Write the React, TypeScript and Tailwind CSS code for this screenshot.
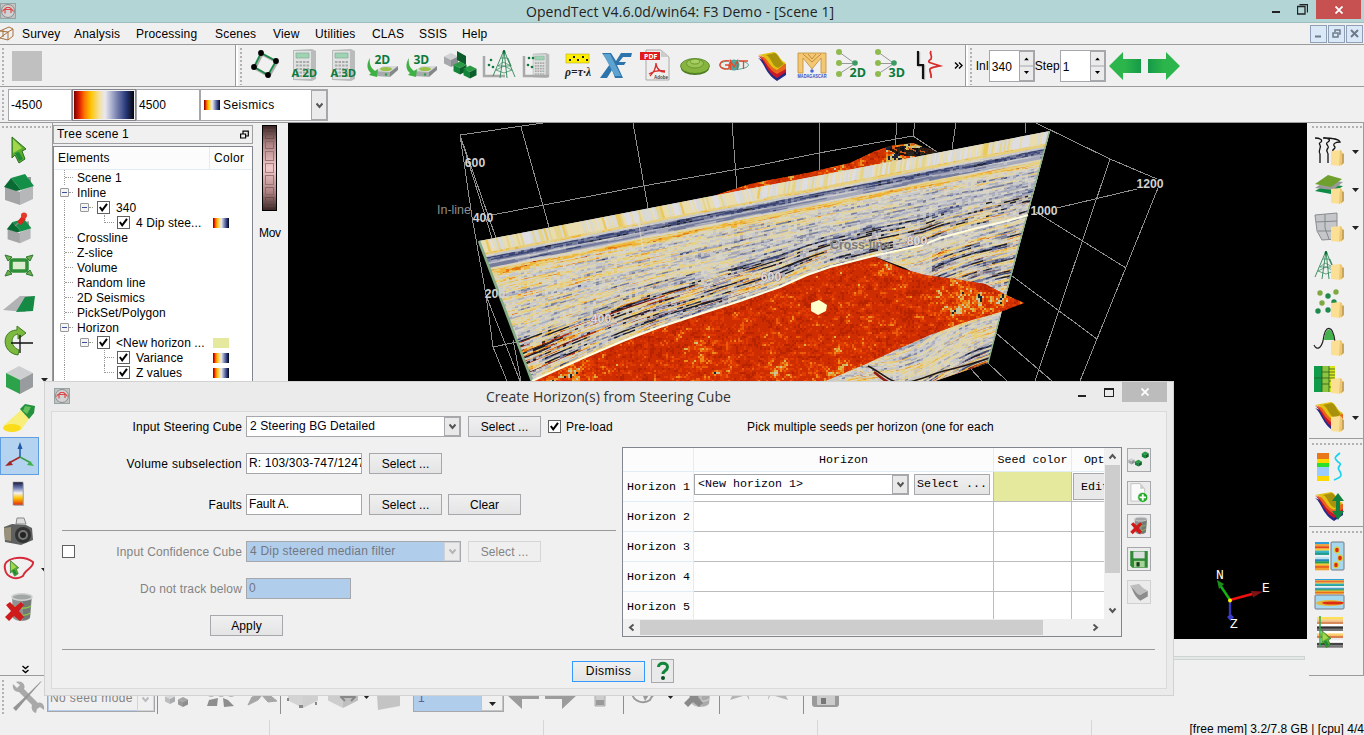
import React from "react";

type Kids = { children?: React.ReactNode };

/* ---------- noise helpers ---------- */
const hash = (x: number, y: number) => {
  let h = (Math.imul(x | 0, 374761393) + Math.imul(y | 0, 668265263)) | 0;
  h = Math.imul(h ^ (h >>> 13), 1274126177);
  return ((h ^ (h >>> 16)) >>> 0) / 4294967296;
};
const smooth = (t: number) => t * t * (3 - 2 * t);
const noise = (x: number, y: number) => {
  const xi = Math.floor(x);
  const yi = Math.floor(y);
  const u = smooth(x - xi);
  const v = smooth(y - yi);
  const a = hash(xi, yi) * (1 - u) + hash(xi + 1, yi) * u;
  const b = hash(xi, yi + 1) * (1 - u) + hash(xi + 1, yi + 1) * u;
  return a * (1 - v) + b * v;
};

/* ---------- seismic section ---------- */
const horizon: [number, number][] = [
  [470, 408], [532, 381], [583, 358], [623, 341], [657, 328], [703, 313], [740, 301], [780, 287],
  [807, 275], [830, 267], [873, 256], [923, 245], [940, 238], [973, 229], [1007, 221], [1028, 215], [1060, 206],
];
const horizonY = (x: number) => {
  for (let i = 1; i < horizon.length; i++) {
    if (x <= horizon[i][0]) {
      const [x0, y0] = horizon[i - 1];
      const [x1, y1] = horizon[i];
      return y0 + ((y1 - y0) * (x - x0)) / (x1 - x0);
    }
  }
  return 206;
};
const topY = (x: number) => 241 - (x - 479) * 0.193;
const palette = [
  "#6b1512", "#b32c10", "#e67a0c", "#efb63a", "#e8cf7c", "#e0d5a8", "#d8d5c8", "#c6c7cc", "#a6a9bb", "#767c9c", "#3c4674", "#1c1c28",
];

const layerY = (t: number, x: number) => {
  const yt = topY(x);
  const yh = horizonY(x);
  if (t <= 1) {
    const k = smooth(Math.min(1, t / 0.8));
    const thick = 150 * (1 - k) + (yh - yt) * k;
    return yt + t * thick;
  }
  const d = (t - 1) * 120;
  const bump = x > 860 ? Math.sin((x - 850) / 30) * Math.min(6, d * 0.06) : 0;
  return yh + d + bump + Math.max(0, x - 900) * -0.06 * (t - 1);
};

const buildSection = () => {
  const out: string[] = palette.map(() => "");
  const step = 3;
  for (let r = 0; r < 300; r++) {
    const t = 0.06 + r * 0.0078;
    for (let x = 476; x < 1052; x += step) {
      if (t > 1.02 && x < 820) continue;
      const y = layerY(t, x);
      let v: number;
      const n = noise(x / 24 + r * 7.3, r * 0.9) - 0.5;
      const layer = noise(3.7, r * 0.62) - 0.5;
      const grain = hash(x, r) - 0.5;
      if (t < 0.105) v = 3.9 + n * 1.6 + grain;
      else if (t < 0.115) v = 6.5 + n * 2;
      else if (t < 0.15) v = 9.3 + n * 2.4 + grain;
      else if (t < 0.165) v = 7.4 + n * 3;
      else if (t < 0.185) v = 8.4 + n * 3;
      else if (t < 0.205) v = 5.5 + n * 3;
      else if (t < 0.235) v = 3.2 + n * 3 + grain;
      else if (t > 0.7 && t < 0.95) {
        const wave = Math.sin(r * 1.55) * 2.2;
        v = 5.4 + wave + n * 10.5 + grain * 2.6;
        if (v > 9 && v < 10.2) v += 1.4;
      } else {
        const strong = t > 0.6 && t < 1.0 ? 1.4 : t > 2.1 ? 2.2 : t > 1.1 && x > 930 && t < 1.6 ? 1.9 : 1;
        v = 5.4 + layer * 2.6 * strong + n * 5.4 * strong + grain * 2.6;
      }
      const i = Math.max(0, Math.min(palette.length - 1, Math.round(v)));
      out[i] += `M${x} ${y.toFixed(1)}L${x + step} ${layerY(t, x + step).toFixed(1)}`;
    }
  }
  return out;
};

const buildCap = () => {
  const colors = ["#dedee2", "#e4d48c", "#e9dcae", "#d9d9d6", "#ecc95c"];
  const out = colors.map(() => "");
  for (let x = 474; x < 1052; x += 2) {
    const n = noise(x / 5, 2) * 0.6 + hash(x, 8) * 0.5;
    const i = n < 0.4 ? 0 : n < 0.6 ? 2 : n < 0.72 ? 3 : n < 0.9 ? 1 : 4;
    out[i] += `M${x} ${(topY(x) - 1).toFixed(1)}l${x < 760 ? 4 : -2} 13`;
  }
  return colors.map((c, i) => ({ c, d: out[i] }));
};

const clusters: [number, number, number, number][] = [
  [965, 303, 30, 0.42], [995, 298, 16, 0.26], [575, 376, 24, 0.42], [716, 373, 12, 0.5], [783, 373, 20, 0.42],
  [790, 303, 8, 0.3], [845, 350, 18, 0.2], [700, 350, 30, 0.15], [890, 270, 16, 0.25], [845, 376, 20, 0.55],
];
const surfaceColors = ["#b92400", "#de3a02", "#ea5c08", "#ec8a1a", "#d8b44c", "#c8c49a", "#1b2130"];
const buildSurface = (x0: number, x1: number, y0: number, y1: number, back: boolean) => {
  const out = surfaceColors.map(() => "");
  for (let y = y0; y < y1; y += 2) {
    for (let x = x0; x < x1; x += 2) {
      let c = 0;
      if (back) c = x > 885 ? 0.6 : 0.18;
      else
        for (const [cx, cy, rad, w] of clusters) {
          const d = ((x - cx) * (x - cx) + (y - cy) * (y - cy) * 2.4) / (rad * rad);
          if (d < 4) c += w * Math.exp(-d);
        }
      const s = noise(x / 7, y / 4) * 0.45 + hash(x, y) * 0.36 + noise(x / 3 + 9, y / 3) * 0.2;
      const v = s + c * (noise(x / 6 + 40, y / 4) * 1.1 + 0.1);
      let i = -1;
      if (v < 0.34) i = 0;
      else if (v > 1.08) i = 6;
      else if (v > 0.98) i = 5;
      else if (v > 0.9) i = 4;
      else if (v > 0.82) i = 3;
      else if (v > 0.73) i = 2;
      else if (v > 0.6) i = 1;
      if (i >= 0) out[i] += `M${x} ${y}h2v2h-2z`;
    }
  }
  return out;
};

const section = buildSection();
const cap = buildCap();
const surface = buildSurface(532, 1026, 254, 382, false);
const backSurface = buildSurface(714, 940, 142, 198, true);
const horizonPts = horizon.slice(1, -1).map((p) => p.join(",")).join(" ");

const gridLines = [
  "M460 135L543 123", "M460 135L472 217L486 295L493 347L507 381", "M460 135L492 238", "M460 135L496 238",
  "M521 127L549 227", "M633 123L648 208", "M732 123L737 189", "M492 215L643 186L750 167L819 153L913 136L937 152",
  "M493 347L517 342", "M487 298L520 381", "M513 340L521 381", "M819 123V170", "M897 123L895 147", "M915 123L913 136",
  "M956 123L952 149", "M1026 123L1025 133", "M1036 123L1110 159L1157 179", "M1110 159L1035 381",
  "M1158 188L1080 381", "M1057 208L1137 189", "M1036 212L1126 268", "M1012 276L1097 339", "M996 333L1052 381",
  "M988 363L1007 381", "M970 368L982 381",
];

const Scene = () => (
  <svg className="block shrink-0 bg-black tracking-normal" width="1019" height="516" viewBox="288 123 1019 516">
    <defs>
      <clipPath id="sec"><polygon points="479,241 1050,131 988,363 935,381 532,381" /></clipPath>
      <clipPath id="surf">
        <polygon points={`${horizon.slice(1, 11).map((p) => p.join(",")).join(" ")} 900,268 925,275 955,279 985,284 1006,295 1024,303 1000,312 965,322 930,335 900,348 868,363 825,381`} />
      </clipPath>
      <clipPath id="back"><polygon points="716,195 750,184 760,182 807,173 850,163 873,152 890,146 913,143 937,152 937,156 716,200" /></clipPath>
    </defs>
    <g fill="none" stroke="#8f8f8f" strokeWidth="1" shapeRendering="crispEdges">
      {gridLines.map((d) => <path key={d} d={d} />)}
    </g>
    <g clipPath="url(#back)" shapeRendering="crispEdges">
      <polygon points="716,200 716,190 873,148 895,144 905,158" fill="#cc3300" />
      {backSurface.map((d, i) => <path key={i} d={d} fill={surfaceColors[i]} />)}
      <path d="M888 149l14-3 4 4 34-6v14l-34-2-10-2z" fill="#0b0b10" opacity=".85" />
      <path d="M892 148l5 2M900 152l6 1M911 144h4M908 148l8 3M920 151l5 1" stroke="#c9581c" strokeWidth="1.500" />
    </g>
    <g clipPath="url(#sec)">
      <rect x="470" y="125" width="590" height="260" fill="#d4d2cc" />
      {section.map((d, i) => <path key={i} d={d} stroke={palette[i]} strokeWidth="1.400" fill="none" />)}
      {cap.map((s, i) => <path key={i} d={s.d} stroke={s.c} strokeWidth="2.2" fill="none" />)}
      <path d="M875 231l8 24M637 212l6 38" stroke="#e6e2d0" strokeWidth="1.5" opacity=".6" />
      <path d="M868 366c16 8 22 17 36 17 16-2 28-10 48-14 14-3 24-7 38-11" stroke="#20160f" strokeWidth="1.500" fill="none" />
      <path d="M874 372c10 8 14 11 20 12M935 383c16-8 34-9 54-18" stroke="#8e1d16" strokeWidth="2.500" fill="none" />
    </g>
    <polygon points="873,256 905,268 914,273 906,274 897,270" fill="#0a0a0a" />
    <g clipPath="url(#surf)">
      <rect x="530" y="250" width="500" height="132" fill="#cd2d00" />
      <g shapeRendering="crispEdges">{surface.map((d, i) => <path key={i} d={d} fill={surfaceColors[i]} />)}</g>
    </g>
    <path d="M479 241L532 381" stroke="#86ad85" strokeWidth="2.6" />
    <path d="M1049.500 131L1007 290M1000 316L988 363" stroke="#8fb48c" strokeWidth="1.4" fill="none" />
    <polyline points={horizonPts} fill="none" stroke="#fffce0" strokeWidth="2" />
    <polygon points="811,303 819,300 827,305 826,311 818,315 811,311" fill="#ffffcc" />
    <g fontFamily="'Liberation Sans', Arial, sans-serif" fontSize="12.200" fontWeight="bold" textAnchor="middle" fill="#d2d2d2">
      <text x="475" y="167">600</text>
      <text x="483" y="222">400</text>
      <text x="454" y="214" fill="#8f8f8f" fontWeight="normal" fontSize="12.500">In-line</text>
      <text x="495" y="298">200</text>
      <text x="601" y="323" fill="#e2dada" stroke="#6a6068" strokeWidth=".6" paintOrder="stroke">400</text>
      <text x="771" y="281" fill="#e2dada" stroke="#6a6068" strokeWidth=".6" paintOrder="stroke">600</text>
      <text x="860" y="249" fill="#7a7a7a">Cross-line</text>
      <text x="917" y="245" fill="#e2dada" stroke="#6a6068" strokeWidth=".6" paintOrder="stroke">800</text>
      <text x="1044" y="215">1000</text>
      <text x="1150" y="188">1200</text>
    </g>
    <g fill="none">
      <path d="M1230 600l-10-15" stroke="#12b512" strokeWidth="2.4" />
      <path d="M1217 580l7 4-5 5z" fill="#1a8f1a" />
      <path d="M1230 600l24-6.500" stroke="#f01010" strokeWidth="2.400" />
      <path d="M1251 591l12 .5-10 6z" fill="#7d1212" />
      <path d="M1230 600v16" stroke="#3535b5" strokeWidth="2.400" />
      <path d="M1227 617l3.500-3 3.500 3-3.500 4z" fill="#3c3cc8" />
      <circle cx="1230" cy="600.500" r="2" fill="#ffee00" />
    </g>
    <g fontFamily="'Liberation Mono', 'Courier New', monospace" fontSize="13" fill="#fff" textAnchor="middle">
      <text x="1220" y="579">N</text><text x="1266" y="592">E</text><text x="1234" y="628">Z</text>
    </g>
  </svg>
);

/* ---------- icons ---------- */
const Ico = ({ children, s = 32 }: Kids & { s?: number }) => (
  <svg className="block shrink-0 overflow-visible tracking-normal" width={s} height={s} viewBox="0 0 32 32" fill="none">{children}</svg>
);
const Tx = ({ x, y, s = 12, children, fill = "#0b7a3b", w = "bold" }: Kids & { x: number; y: number; s?: number; fill?: string; w?: string }) => (
  <text x={x} y={y} fontSize={s} fontWeight={w} fill={fill} fontFamily="'Open Sans', sans-serif">{children}</text>
);
const Cube = ({ x, y, r, a, b, c }: { x: number; y: number; r: number; a: string; b: string; c: string }) => {
  const h = r * 0.5;
  return (
    <g>
      <path d={`M${x} ${y - r}l${r} ${h}l${-r} ${h}l${-r} ${-h}z`} fill={a} />
      <path d={`M${x - r} ${y - h}l${r} ${h}v${r}l${-r} ${-h}z`} fill={b} />
      <path d={`M${x + r} ${y - h}l${-r} ${h}v${r}l${r} ${-h}z`} fill={c} />
    </g>
  );
};
const green = { a: "#2a9a45", b: "#12853a", c: "#0b5f2a" };
const gray3 = { a: "#d0d2d4", b: "#a6a8ab", c: "#8d9093" };

const Calc = ({ x = 5 }: { x?: number }) => (
  <g>
    <path d={`M${x} 1l19-1 4 2v28l-4 2-19-1z`} fill="#b9bcbb" />
    <path d={`M${x + 1} 2h17v28h-17z`} fill="#dfe2e1" />
    <path d={`M${x + 3} 4h13v5h-13z`} fill="#9fd3b4" stroke="#7fa690" strokeWidth=".6" />
    <path d={`M${x + 3} 13h13M${x + 3} 16.500h13M${x + 3} 20h13M${x + 3} 23.500h13M${x + 3} 27h13`} stroke="#aaa" strokeWidth="2" strokeDasharray="2.500 1" />
  </g>
);
const Drive = () => (
  <g>
    <path d="M9 22l8-5h15l-8 6z" fill="#d6d8da" /><path d="M9 22l15 1v5l-15-1z" fill="#a9acae" /><path d="M24 23l8-6v4l-8 7z" fill="#85888b" />
    <ellipse cx="20" cy="20" rx="6" ry="2" fill="#9ac24a" /><circle cx="20" cy="25.500" r="1.200" fill="#27a343" />
    <path d="M4 9c-4 6-3 12 1 15l-2 2 8 2 1-8-3 2C5 19 3 15 4 9z" fill="#3fb043" />
  </g>
);
const Tower = ({ x = 16, y = 1, h = 28 }: { x?: number; y?: number; h?: number }) => (
  <g stroke="#2c8555" strokeWidth=".9">
    <path d={`M${x} ${y}l-11 ${h - 2}M${x} ${y}l11 ${h - 1}M${x} ${y}l-4 ${h}M${x} ${y}l3 ${h}`} />
    <path d={`M${x - 3} ${y + 8}h6l4 8h-13l5-4 8 4-3-8M${x - 8} ${y + 20}l8-4 8 4-8 3z`} strokeWidth=".7" />
    <circle cx={x} cy={y + 2} r="1.400" fill="#0b6b35" stroke="none" />
  </g>
);
const Folder = () => (
  <g>
    <path d="M17 15l9-1 1 2 3 1v10l-3 3-10-1z" fill="#fbdf94" /><path d="M27 17l3 1v9l-3 2z" fill="#caa458" /><path d="M26 14l2 1v12l-3 3z" fill="#ecc775" />
  </g>
);
const Layers = () => (
  <g>
    <path d="M1 6c7 5 7 16 19 23l9-6V17z" fill="#232a86" /><path d="M1 4c8 5 7 15 19 22l9-6V14z" fill="#c9162a" />
    <path d="M1 3c8 4 8 13 19 19l9-5V12z" fill="#e8651c" /><path d="M1 3l16-3c5 1 5 8 12 11l-9 7C10 14 12 4 1 3z" fill="#e3c011" /><path d="M9 3l9-2c4 2 5 8 9 11l-6 4C14 13 15 6 9 3z" fill="#a8920b" />
  </g>
);
const Node3 = ({ t }: { t: string }) => (
  <g>
    <path d="M4 3l16 11.500L4 25M4 14.500h16" stroke="#999" />
    {[[4, 3], [4, 14], [4, 25]].map(([a, b]) => <circle key={b} cx={a} cy={b} r="3" fill="#8fba4e" />)}
    <circle cx="20" cy="14" r="2.800" fill="#3b9c63" />
    <Tx x={14.500} y={28} s={12.500}>{t}</Tx>
  </g>
);
const Trash = ({ g = false }: { g?: boolean }) => (
  <g>
    <path d="M9 4l1 22c3 4 14 4 17 0l2-22z" fill={g ? "#bbb" : "#8f9391"} /><path d="M20 8v20c3 0 6-1 7-3l1-18z" fill={g ? "#aaa" : "#747876"} />
    <ellipse cx="19" cy="5" rx="10" ry="3.200" fill={g ? "#aaa" : "#a2a6a4"} stroke="#cfd2d0" strokeWidth="1.500" />
    <path d="M10 14c5 3 14 3 18 0M10 21c5 3 14 3 17 0" stroke={g ? "#ccc" : "#8bc34a"} strokeWidth="1.300" />
    <path d="M3 13l4-3 5 5 6-5 3 3-5 6 5 6-4 4-6-5-5 5-4-4 6-6z" fill={g ? "#8a8a8a" : "#cf1b1b"} />
  </g>
);
const Cursor = ({ x = 0, y = 0, k = 1 }: { x?: number; y?: number; k?: number }) => (
  <g transform={`translate(${x} ${y}) scale(${k})`}>
    <path d="M9 1l14 12-4 2 3 8-6 4-4-8-3 3z" fill="#5cae2f" stroke="#2b6d22" /><path d="M10 3l9 9-9 5z" fill="#a4d64c" /><path d="M16 16l4 7-4 2-4-8z" fill="#1d8b38" />
  </g>
);
const RainbowV = ({ x, y, w, h }: { x: number; y: number; w: number; h: number }) => {
  const c = ["#2d9fd8", "#f0a030", "#e5481f", "#f5d040", "#3ab5d0", "#1c9c88", "#e8f0f4", "#bfe0ef", "#2487c0", "#25a050", "#f2c63a", "#e8641f", "#f0a030"];
  return <g>{c.map((k, i) => <rect key={i} x={x} y={y + (h / c.length) * i} width={w} height={h / c.length + 0.3} fill={k} />)}</g>;
};
const Logo = () => (
  <svg className="block shrink-0" width="16" height="16" viewBox="0 0 16 16" fill="none">
    <rect x=".5" y=".5" width="15" height="15" fill="#bfc2c0" stroke="#98a3a3" /><circle cx="8" cy="8" r="6.500" fill="#d2d2d2" stroke="#8d8d8d" />
    <path d="M2.500 8.500L4 6.500h8l1.500 2M4.500 6.500l2-2h3l2 1.500M5 10.500V7M11 10V7" stroke="#dd4848" strokeWidth="1.200" />
  </svg>
);
const Tri = () => <svg width="7" height="4" viewBox="0 0 7 4" className="block shrink-0"><path d="M0 0h7L3.500 4z" fill="#222" /></svg>;

const topIcons: React.ReactNode[] = [
  <g><path d="M12 4l15 8-8 14L5 18z" stroke="#aaa" strokeWidth="3" transform="translate(1 1)" /><path d="M12 4l15 8-8 14L5 18z" stroke="#148a44" strokeWidth="1.800" />{[[12, 4], [27, 12], [19, 26], [5, 18]].map(([a, b]) => <circle key={a} cx={a} cy={b} r="2.900" fill="#000" />)}</g>,
  <g><Calc /><Tx x={3.500} y={27.500} s={11.300}>A 2D</Tx></g>,
  <g><Calc /><Tx x={3.500} y={27.500} s={11.300}>A 3D</Tx></g>,
  <g><Drive /><Tx x={8.500} y={14.500} s={12}>2D</Tx></g>,
  <g><Drive /><Tx x={8.500} y={14.500} s={12}>3D</Tx></g>,
  <g><Cube x={7} y={11} r={7} {...gray3} /><path d="M13 2l9 5v9l-9-5z" fill="#0c5c2b" /><Cube x={16} y={19} r={6.500} {...green} /><Cube x={26} y={23} r={6.500} {...green} /></g>,
  <g><path d="M1 7v20h21" stroke="#a9a9a9" strokeWidth="2.500" /><Tower x={21} /><circle cx="8" cy="11" r="1.300" fill="#0b7a3b" /><circle cx="6" cy="16" r="1.300" fill="#0b7a3b" /><circle cx="10" cy="18" r="1.300" fill="#0b7a3b" /></g>,
  <g><g transform="translate(10 4) scale(.72 .78)"><Calc x={1} /></g><path d="M2 7v20h25" stroke="#a9a9a9" strokeWidth="2.500" /><circle cx="7" cy="9" r="1.300" fill="#0b7a3b" /><circle cx="6" cy="16" r="1.300" fill="#0b7a3b" /><circle cx="11" cy="9" r="1.300" fill="#0b7a3b" /><circle cx="10" cy="18" r="1.300" fill="#0b7a3b" /></g>,
  <g><rect x="5" y="5" width="23" height="9" fill="#ffee00" stroke="#b8ae2a" strokeWidth=".6" />{[8, 12, 16, 21, 25].map((a, i) => <rect key={a} x={a} y={i % 2 ? 7 : 10} width="2" height="2" fill="#222" />)}<text x="4" y="27" fontSize="11.500" fontWeight="bold" fontStyle="italic" fontFamily="'Liberation Serif', serif" fill="#222" textLength="26">ρ=τ·λ</text></g>,
  <g><path d="M2 4h9l5 8 5-8h11l-1 4h-8l-4 5h7l-2 3h-7l6 13h-8l-3-8-5 8H0l10-14z" fill="#2d74ad" /><path d="M3 5h7l11 22h-6z" fill="#5ea3cf" /></g>,
  <g><path d="M7 1h15l8 7v23H7z" fill="#eee" stroke="#aaa" /><path d="M22 1l8 7h-8z" fill="#ccc" /><rect x="1" y="3" width="20" height="8" fill="#e01b1b" /><Tx x={5} y={9.700} s={7} fill="#fff">PDF</Tx><path d="M11 27c3-3 6-8 6-13M17 15c1 5 4 8 9 8M10 25c5-3 10-4 16-3" stroke="#d92c2c" strokeWidth="1.300" /><text x="15" y="30" fontSize="6" fontWeight="bold" fill="#444" textLength="14" lengthAdjust="spacingAndGlyphs" fontFamily="'Liberation Sans', sans-serif">Adobe</text></g>,
  <g><ellipse cx="16" cy="19" rx="14" ry="7" fill="#4b7a22" /><ellipse cx="16" cy="17" rx="14.500" ry="7.500" fill="#86b43e" stroke="#4f7f22" strokeWidth=".8" /><ellipse cx="16" cy="14.500" rx="8.500" ry="4.500" fill="#9ac552" stroke="#5f8d2b" strokeWidth=".8" /><ellipse cx="16" cy="12.500" rx="4.500" ry="2.500" fill="#a9d162" stroke="#5f8d2b" strokeWidth=".8" /></g>,
  <g><ellipse cx="16" cy="16" rx="14.500" ry="4.500" fill="#e8f0ee" stroke="#58a99e" /><circle cx="16" cy="16" r="5.500" fill="#4ea79c" /><path d="M11 12c-4-1-9 0-9 4s7 5 9 3v-3H7M12.500 21v-9l3.500 6 3.500-6v9M21 12h9M25.500 12v8" stroke="#e2492f" strokeWidth="1.300" /></g>,
  <g transform="translate(0 3)"><Layers /></g>,
  <g><path d="M2 24V4h28v20h-5V9l-9 11L7 9v15z" fill="#f4c873" stroke="#c08a35" strokeWidth=".8" /><path d="M7 5l9 8 9-8M12 5l4 5 4-5" stroke="#c08a35" /><circle cx="16" cy="22" r="1.800" fill="#5063d0" /><text x="1.500" y="28.500" fontSize="5" fontWeight="bold" fill="#3b4cc0" textLength="29" lengthAdjust="spacingAndGlyphs" fontFamily="'Liberation Sans', sans-serif">MADAGASCAR</text></g>,
  <Node3 t="2D" />,
  <Node3 t="3D" />,
  <g><path d="M5 2v14h5v14" stroke="#bbb" strokeWidth="2.500" transform="translate(1 1)" /><path d="M5 2v14h5v14" stroke="#111" strokeWidth="2.200" /><path d="M18 2c-2 3 2 5 0 8-3 2-3 3 0 4 3 1 6 2 9 3-4 1-8 1-10 3-1 3 2 4 1 9" stroke="#d92b2b" strokeWidth="1.800" /></g>,
];

const House = () => (
  <g>
    <path d="M2 13l15 5v13L2 26z" fill="#a3a5a7" /><path d="M17 17l13-5v13l-13 6z" fill="#b5b7b9" /><path d="M25 3h3v8h-3z" fill="#999" />
    <path d="M8 4l14-4 9 12-13 4L8 4z" fill="#138f48" /><path d="M1 13L8 4l10 12-5 1z" fill="#0a6a33" />
  </g>
);
const leftIcons: React.ReactNode[] = [
  <Cursor />,
  <House />,
  <g><g transform="translate(3 7) scale(.82 .78)"><House /></g><path d="M12 14L20 6" stroke="#888" strokeWidth="1.500" /><path d="M14 10l5-6 4 3-5 6z" fill="#d92a1f" /><circle cx="21" cy="3.500" r="3" fill="#e23b2c" /></g>,
  <g><path d="M2 5l7 2-4 4zM30 5l-7 2 4 4zM2 26l7-2-4-4zM30 26l-7-2 4-4z" fill="#6fae4e" stroke="#2f7a35" /><rect x="8" y="10" width="16" height="11" rx="2" fill="#dceccf" stroke="#2f8e38" strokeWidth="3.500" /></g>,
  <g><path d="M0 22L17 8h15l-10 16z" fill="#b1b3b5" /><path d="M13 24L22 9l10-1-2 15z" fill="#158a45" /></g>,
  <g><path d="M15 8c-7 1-9 12 1 16l-1 5C-2 27-2 4 14 4V0l9 7-8 6z" fill="#7db93f" stroke="#3d7d22" /><path d="M17 9v18M8 17h22" stroke="#111" strokeWidth="1.300" /></g>,
  <g><path d="M3 9L16 2l14 7-13 7z" fill="#cdcfd0" /><path d="M3 9l14 7v14L3 23z" fill="#2ca24a" /><path d="M17 16l13-7v14l-13 7z" fill="#999c9e" /></g>,
  <g><path d="M0 24L18 8l10 6-10 14z" fill="#f7ee7c" /><ellipse cx="9" cy="26" rx="9" ry="4" fill="#fbdc1b" /><path d="M17 7l5-5 10 2-1 7-5 6z" fill="#23913f" /><path d="M22 4l6 1-4 7-4-3z" fill="#63c05c" /></g>,
  <g strokeWidth="1.500"><path d="M17 17V5" stroke="#2159a8" /><path d="M14.500 9L17 2l2.500 7z" fill="#2159a8" /><path d="M17 17L6 23" stroke="#a32626" /><path d="M2 26l5-5 3 4z" fill="#a32626" /><path d="M17 17l11 6" stroke="#3b9f45" /><path d="M31 26l-7-1 3-4z" fill="#3fb34a" /></g>,
  <g><defs><linearGradient id="cb" x1="0" y1="0" x2="0" y2="1"><stop offset="0" stopColor="#15183a" /><stop offset=".25" stopColor="#6b78b0" /><stop offset=".48" stopColor="#f2f2f2" /><stop offset=".7" stopColor="#ffc400" /><stop offset="1" stopColor="#e02a10" /></linearGradient></defs><rect x="11" y="5" width="10" height="23" fill="#bbb" /><rect x="10" y="4" width="10" height="23" fill="url(#cb)" stroke="#999" strokeWidth=".6" /></g>,
  <g><path d="M13 8l1-6h7l2 6z" fill="#ddd" stroke="#888" /><path d="M1 11l8-3 14 1 6 3 1 12-12 5L2 26z" fill="#5e615f" /><path d="M1 12l7-1v14l-6-1z" fill="#9a917c" /><circle cx="20" cy="19" r="8" fill="#303332" /><circle cx="20" cy="19" r="5" fill="#777" /><circle cx="20" cy="19" r="3" fill="#222" /></g>,
  <g><path d="M2 15C-1 3 20 1 30 8c1 6-8 7-10 14-7 5-17 1-18-7z" stroke="#d62a3a" strokeWidth="2" /><Cursor x={2} y={6} k={0.6} /></g>,
  <Trash />,
];

const rightIcons: React.ReactNode[] = [
  <g stroke="#111" strokeWidth="1.300"><path d="M1 2c5 0 8 2 6 4-4 2 1 3-1 6 0 3-2 3 0 6v9M10 2c5 0 7 2 4 4-4 2 2 4 0 6-3 3 0 4 0 6v9M9 2c9 0 16 1 17 4-5 0-8 2-5 5 1 2-4 2-2 6" /></g>,
  <g><path d="M1 17l12-7 16 2-12 8z" fill="#0f8a44" /><path d="M1 14l12-8 16 2-10 8z" fill="#999" /><path d="M1 10L14 1l14 4-11 8z" fill="#6fa02d" /></g>,
  <g><path d="M1 3l22-2v26L8 28 3 19z" fill="#c4c6c9" stroke="#8b8d90" /><path d="M11 2v14l4 11M2 10l21-1M4 19h19" stroke="#85878a" /></g>,
  <Tower x={12} />,
  <g>{[[6, 5, "#7ea941"], [22, 4, "#7ea941"], [14, 8, "#1f8a4c"], [8, 15, "#7ea941"], [20, 14, "#1f8a4c"], [4, 23, "#1f8a4c"], [14, 22, "#1f8a4c"]].map(([a, b, c]) => <circle key={`${a}-${b}`} cx={a} cy={b} r="2.700" fill={c as string} />)}</g>,
  <g><path d="M10 14C11 0 19 0 20 14z" fill="#43b24c" /><path d="M0 19c3 6 7 3 9-4C11-2 19-2 21 16" stroke="#222" strokeWidth="1.200" /></g>,
  <g><rect x="0" y="2" width="8" height="26" fill="#0f9b4b" /><rect x="8" y="2" width="7" height="26" fill="#8cc63f" /><rect x="15" y="2" width="6" height="26" fill="#dce321" /><path d="M0 14h15M8 8h13M8 20h7M15 5h6M15 11h6M15 17h6M15 14h6M15 23h6M8 2v26M15 2v26" stroke="#2b5c1c" strokeWidth=".8" /></g>,
  <Layers />,
];

/* ---------- small widgets ---------- */
const Chev = ({ c = "#555", w = 7 }: { c?: string; w?: number }) => (
  <svg width={w} height="7" viewBox="0 0 7 7" className="block"><path d="M.5 1.500l3 3.500 3-3.500" stroke={c} strokeWidth="2" fill="none" /></svg>
);
const Combo = ({ text, cls = "", off = false }: { text: string; cls?: string; off?: boolean }) => (
  <div className={`flex h-[21px] w-[215px] shrink-0 items-stretch border border-[#a5a7ab] ${off ? "bg-[#b0cdec] text-[#74787e]" : "bg-white text-[#000018]"} ${cls}`}>
    <span className="flex-1 overflow-hidden pl-[3px] leading-[19px] whitespace-pre">{text}</span>
    <span className={`flex w-[16px] items-center justify-center border ${off ? "border-[#cfd2d6] bg-[#eaeaea]" : "border-[#a9a9ad] bg-[#e9e9e9]"}`}><Chev c={off ? "#b5b5b5" : "#555"} /></span>
  </div>
);
const Btn = ({ children, cls = "", off = false, mark = false }: Kids & { cls?: string; off?: boolean; mark?: boolean }) => (
  <div className={`flex h-[21px] shrink-0 items-center justify-center border whitespace-pre ${mark ? "border-[#3399ff]" : off ? "border-[#d5d5d5] text-[#838383]" : "border-[#a6a8ac]"} ${off ? "bg-[#efefef]" : "bg-linear-to-b from-[#f0f0f0] to-[#e4e4e4]"} ${cls}`}>{children}</div>
);
const Check = ({ on = true }: { on?: boolean }) => (
  <span className="flex h-[13px] w-[13px] shrink-0 items-center justify-center border border-[#606060] bg-white">
    {on && <svg width="9" height="9" viewBox="0 0 9 9"><path d="M.8 4l2.400 3.300L8 .8" stroke="#000" strokeWidth="2" fill="none" /></svg>}
  </span>
);
const Dots = ({ v = false, cls = "" }: { v?: boolean; cls?: string }) => (
  <div className={`shrink-0 bg-[radial-gradient(circle_at_1px_1px,#b2b2b2_1px,transparent_1.200px)] ${v ? "w-[3px] bg-size-[3px_4px]" : "h-[3px] bg-size-[4px_3px]"} ${cls}`} />
);
const Grad = ({ cls = "" }: { cls?: string }) => (
  <span className={`block shrink-0 bg-[linear-gradient(90deg,#7a0000,#e02000_9%,#ff7a00_18%,#ffc400_28%,#f4e0a0_42%,#e8e8f0_52%,#8089b5_70%,#2a3a7c_86%,#05050c)] ${cls}`} />
);
const Field = ({ children, cls = "" }: Kids & { cls?: string }) => (
  <div className={`h-[21px] shrink-0 overflow-hidden border border-[#a5a7ab] pl-[2px] leading-[19px] whitespace-nowrap ${cls}`}>{children}</div>
);

/* ---------- tree ---------- */
type Row = { t: string; lvl: number; exp?: boolean; sw?: "grad" | "plain"; last?: boolean };
const rows: Row[] = [
  { t: "Scene 1", lvl: 0 }, { t: "Inline", lvl: 0, exp: true }, { t: "340", lvl: 1, exp: true },
  { t: "4 Dip stee...", lvl: 2, sw: "grad", last: true }, { t: "Crossline", lvl: 0 }, { t: "Z-slice", lvl: 0 },
  { t: "Volume", lvl: 0 }, { t: "Random line", lvl: 0 }, { t: "2D Seismics", lvl: 0 }, { t: "PickSet/Polygon", lvl: 0 },
  { t: "Horizon", lvl: 0, exp: true }, { t: "<New horizon ...", lvl: 1, exp: true, sw: "plain" },
  { t: "Variance", lvl: 2, sw: "grad" }, { t: "Z values", lvl: 2, sw: "grad", last: true },
];
const Expander = () => (
  <span className="flex h-[9px] w-[9px] shrink-0 items-center justify-center rounded-[1px] border border-[#999] bg-[#f4f4f4]"><span className="h-px w-[5px] bg-[#3b4f9b]" /></span>
);
const HDots = ({ cls = "" }: { cls?: string }) => <span className={`h-0 shrink-0 border-t border-dotted border-[#999] ${cls}`} />;
const TreeRow = ({ r }: { r: Row }) => (
  <div className="flex h-[15px] items-center">
    {r.lvl === 0 && r.exp && <><span className="w-[6px]" /><Expander /><HDots cls="mr-[4px] w-[4px]" /></>}
    {r.lvl === 0 && !r.exp && <><span className="ml-[10px] h-full border-l border-dotted border-[#999]" /><HDots cls="mr-[4px] w-[8px]" /></>}
    {r.lvl > 0 && <span className="ml-[10px] h-full w-[16px] shrink-0 border-l border-dotted border-[#999]" />}
    {r.lvl === 1 && <><Expander /><HDots cls="mr-[4px] w-[4px]" /><Check /><span className="w-[6px]" /></>}
    {r.lvl === 2 && <><span className={`ml-[24px] w-0 shrink-0 border-l border-dotted border-[#999] ${r.last ? "h-[8px] self-start" : "h-full"}`} /><HDots cls="mr-[3px] w-[9px]" /><Check /><span className="w-[6px]" /></>}
    <span className="w-0 flex-1 overflow-visible whitespace-pre">{r.t}</span>
    {r.sw === "grad" && <Grad cls="mr-[23px] h-[10px] w-[16px]" />}
    {r.sw === "plain" && <span className="mr-[23px] h-[10px] w-[16px] shrink-0 bg-[#e4e99e]" />}
  </div>
);

/* ---------- dialog ---------- */
const sideIcons: React.ReactNode[] = [
  <g><Cube x={4} y={18} r={5} {...gray3} /><Cube x={15} y={21} r={5.500} {...green} /><Cube x={26} y={8} r={5.500} {...green} /></g>,
  <g><path d="M3 1h15l7 8v20H3z" fill="#fafafa" stroke="#aaa" /><path d="M18 1l7 8h-7z" fill="#ccc" /><circle cx="22" cy="23" r="8" fill="#23a829" stroke="#fff" /><path d="M22 18v10M17 23h10" stroke="#fff" strokeWidth="3" /></g>,
  <Trash />,
  <g><path d="M2 3h28v27H5l-3-4z" fill="#2f8a36" /><path d="M7 4h18v11H7z" fill="#dcdedd" /><path d="M8 19h17v10H8z" fill="#a8d29a" /><path d="M12 21h5v7h-5z" fill="#153d1a" /></g>,
  <g><path d="M1 6c5 3 5 15 17 24l12-7v-9L18 20z" fill="#8c8c8c" /><path d="M1 6l14-3c5 1 4 7 15 10l-12 8C9 19 9 9 1 6z" fill="#bdbdbd" /></g>,
];

const Label = ({ children, off = false }: Kids & { off?: boolean }) => (
  <span className={`mr-[4px] flex-1 text-right whitespace-pre tracking-[0.14px] ${off ? "text-[#838383]" : ""}`}>{children}</span>
);

const Dialog = () => (
  <div className="absolute top-[381px] left-[44px] flex h-[315px] w-[1130px] flex-col border border-[#d2d2d2] bg-[#ebebeb]">
    <div className="flex h-[29px] items-start">
      <div className="pt-[6px] pl-[9px]"><Logo /></div>
      <div className="flex-1 pt-[4px] pl-[416px] font-['Open_Sans',sans-serif] text-[14px] leading-[22px] tracking-[0.04px] whitespace-nowrap text-[#333]">Create Horizon(s) from Steering Cube</div>
      <div className="mt-[13px] mr-[18px] h-[2px] w-[8px] bg-[#222]" />
      <div className="mt-[6px] mr-[8px] h-[9px] w-[10px] border border-t-2 border-[#222]" />
      <div className="mr-[6px] flex h-[20px] w-[45px] items-center justify-center bg-[#bcbcbc]">
        <svg width="8" height="8" viewBox="0 0 8 8"><path d="M.5.5l7 7M7.500.5l-7 7" stroke="#fff" strokeWidth="1.800" /></svg>
      </div>
    </div>
    <div className="ml-[6px] flex h-[278px] w-[1116px] flex-col border border-[#dadada] bg-[#f0f0f0]">
      <div className="flex h-[237px]">
        <div className="flex w-[570px] flex-col pt-[4px] pl-[10px]">
          <div className="flex h-[21px] items-center">
            <div className="flex w-[184px]"><Label>Input Steering Cube</Label></div>
            <Combo text="2 Steering BG Detailed" /><Btn cls="ml-[7px] w-[73px]">Select ...</Btn>
            <span className="w-[7px]" /><Check /><span className="ml-[5px] tracking-[0.2px]">Pre-load</span>
          </div>
          <div className="mt-[16px] flex h-[21px] items-center">
            <div className="flex w-[184px]"><span className="mr-[4px] flex-1 text-right tracking-[0.28px] whitespace-pre">Volume subselection</span></div>
            <Field cls="w-[116px] bg-white tracking-[0.16px]">R: 103/303-747/1247</Field><Btn cls="ml-[7px] w-[73px]">Select ...</Btn>
          </div>
          <div className="mt-[20px] flex h-[21px] items-center">
            <div className="flex w-[184px]"><Label>Faults</Label></div>
            <Field cls="w-[116px] bg-white tracking-[-0.1px]">Fault A.</Field><Btn cls="ml-[7px] w-[73px]">Select ...</Btn><Btn cls="ml-[6px] w-[73px]">Clear</Btn>
          </div>
          <div className="mt-[15px] h-px w-[554px] shrink-0 bg-[#999]" />
          <div className="mt-[10px] flex h-[21px] items-center">
            <Check on={false} />
            <div className="flex w-[171px]"><Label off>Input Confidence Cube</Label></div>
            <Combo off text="4 Dip steered median filter" cls="tracking-[0.2px]" /><Btn off cls="ml-[7px] w-[73px]">Select ...</Btn>
          </div>
          <div className="mt-[16px] flex h-[21px] items-center">
            <div className="flex w-[184px]"><Label off>Do not track below</Label></div>
            <Field cls="w-[105px] bg-[#b0cdec] text-[#74787e]">0</Field>
          </div>
          <Btn cls="mt-[16px] ml-[148px] w-[73px]">Apply</Btn>
        </div>
        <div className="flex w-[500px] flex-col">
          <div className="flex h-[35px] items-center pb-[5px] pl-[125px] tracking-[0.15px] whitespace-pre">Pick multiple seeds per horizon (one for each</div>
          <div className="flex h-[190px] w-[500px] flex-col border border-[#82868f] bg-[#f0f0f0] font-['Liberation_Mono','Courier_New',monospace] text-[11.670px] tracking-normal">
            <div className="flex h-[171px] bg-white">
              <div className="flex w-[481px] flex-col overflow-hidden">
                <div className="flex h-[24px] shrink-0 border-b border-[#e2ecf5] bg-[#fcfcfc] leading-[25px]">
                  <span className="w-[71px] shrink-0 border-r border-[#e2ecf5]" />
                  <span className="w-[300px] shrink-0 border-r border-[#e2ecf5] text-center">Horizon</span>
                  <span className="w-[78px] shrink-0 border-r border-[#e2ecf5] text-center">Seed color</span>
                  <span className="w-[32px] shrink-0 pl-[12px] tracking-[-0.3px]">Opt</span>
                </div>
                {[1, 2, 3, 4, 5].map((n) => (
                  <div key={n} className="flex h-[30px] shrink-0">
                    <div className="w-[71px] shrink-0 border-r border-b border-[#e2ecf5] bg-[#fcfcfc] pl-[4px] leading-[31px] whitespace-pre">Horizon {n}</div>
                    <div className="flex w-[300px] shrink-0 border-r border-b border-[#bcbcbc] pt-[2px]">
                      {n === 1 && <><Combo text="<New horizon 1>" /><Btn cls="ml-[5px] w-[76px]">Select ...</Btn></>}
                    </div>
                    <div className={`w-[78px] shrink-0 border-r border-b border-[#bcbcbc] ${n === 1 ? "bg-[#e4e99e]" : ""}`} />
                    <div className="w-[60px] shrink-0 border-b border-[#bcbcbc] pt-px pl-px">{n === 1 && <div className="h-[27px] border border-[#a6a8ac] bg-[#e9e9e9] pl-[7px] leading-[27px]">Edit</div>}</div>
                  </div>
                ))}
              </div>
              <div className="flex w-[17px] flex-col items-center bg-[#f0f0f0]">
                <div className="flex h-[17px] rotate-180 items-center"><Chev w={9} /></div>
                <div className="h-[108px] w-[15px] bg-[#cdcdcd]" />
                <div className="mt-[34px]"><Chev w={9} /></div>
              </div>
            </div>
            <div className="mt-px flex h-[15px] items-center">
              <div className="flex w-[17px] rotate-90 justify-center"><Chev w={9} /></div>
              <div className="h-[15px] w-[403px] bg-[#cdcdcd]" />
              <div className="ml-[48px] -rotate-90"><Chev w={9} /></div>
            </div>
          </div>
        </div>
        <div className="ml-[5px] flex flex-col gap-[9px] pt-[36px]">
          {sideIcons.map((ic, i) => (
            <div key={i} className={`flex h-[24px] w-[24px] items-center justify-center border ${i === 4 ? "border-[#d0d0d0]" : "border-[#a6a8ac]"} bg-[#ebebeb]`}><Ico s={20}>{ic}</Ico></div>
          ))}
        </div>
      </div>
      <div className="ml-[10px] h-px w-[1093px] bg-[#999]" />
      <div className="mt-[9px] flex items-center pl-[520px]">
        <Btn mark cls="w-[73px] tracking-[0.5px]">Dismiss</Btn>
        <div className="ml-[6px] flex h-[24px] w-[23px] items-center justify-center border border-[#a6a8ac] bg-[#e9e9e9]">
          <svg width="14" height="20" viewBox="0 0 14 20" fill="none"><path d="M2.500 6C2.500 1 11.500 1 11.500 6c0 4-4.500 3.500-4.500 7" stroke="#12853a" strokeWidth="3" /><circle cx="7" cy="17" r="2" fill="#0a4f22" /></svg>
        </div>
      </div>
    </div>
  </div>
);

/* ---------- bottom toolbar ---------- */
const Sep = ({ cls = "" }: { cls?: string }) => <div className={`h-[36px] w-px shrink-0 bg-[#8e8e8e] ${cls}`} />;
const BottomBar = () => (
  <div className="flex h-[43px] shrink-0 items-start pt-[2px]">
    <Dots v cls="mt-[2px] ml-[2px] h-[36px]" />
    <div className="mt-[2px] ml-[7px]"><Ico><path d="M4 2c7-2 10 4 8 7l14 14c4-2 7 3 6 7l-4-3-3 2-1 4c-4-1-5-5-4-8L7 12c-5 0-7-4-6-8l4 4 3-3z" fill="#a9a9a9" /><path d="M30 1L15 18 4 31l-3-3L14 16 28 2z" fill="#959595" /></Ico></div>
    <div className="ml-[3px] flex h-[34px] w-[108px] items-stretch border border-[#a5a7ab] shadow-[inset_1px_-1px_0_#b5cdea]">
      <span className="flex-1 pt-[12px] pl-[2px] leading-[14px] tracking-[0.4px] text-[#838383]">No seed mode</span>
      <span className="flex w-[17px] justify-center border border-[#d5d5d5] pt-[16px]"><Chev c="#bbb" /></span>
    </div>
    <Sep cls="ml-[2px]" />
    <div className="ml-[6px] flex gap-[9px] opacity-70">
      <Ico><Cube x={6} y={21} r={5} {...gray3} /><Cube x={19} y={24} r={5} a="#888" b="#777" c="#666" /></Ico>
      <Ico><path d="M1 15c3 4 7 4 9 0M11 15c3 4 7 4 9 0M21 15c3 4 7 4 9 0" stroke="#999" strokeWidth="2" /><path d="M4 22l9-2-1 8H2zM18 20l5 2 6 6-10 1z" fill="#666" /></Ico>
      <Ico><path d="M2 27l4-8 10-2-4 5zM14 15h7l10 8-9 1z" fill="#888" stroke="#888" /></Ico>
    </div>
    <Sep cls="ml-[2px]" />
    <div className="ml-[6px] flex gap-[8px]">
      <Ico><Cube x={16} y={15} r={15} a="#ddd" b="#d3d3d3" c="#cfcfcf" /><path d="M0 20h2v3H0zM12 27h4v3h-4zM28 24h2v3h-2z" fill="#888" /></Ico>
      <Ico><Cube x={16} y={15} r={15} a="#ddd" b="#cdcdcd" c="#bfbfbf" /><path d="M15 19h12M18 15l-4 4 4 4M24 15l4 4-4 4" stroke="#888" strokeWidth="2" /></Ico>
    </div>
    <div className="mt-[17px] ml-[4px]"><Tri /></div>
    <div className="ml-[6px]"><Ico><path d="M1 17l13-8 18 5-8 3v11l-22 4z" fill="#c4c4c4" /><path d="M1 17l13-4 18 1" stroke="#999" strokeWidth="2" /></Ico></div>
    <div className="ml-[5px] flex h-[34px] w-[91px] border border-[#a5a7ab] bg-[#b0cdec]">
      <span className="flex-1 pt-[12px] pl-[4px] leading-[14px] text-[#60648c]">1</span>
      <span className="flex w-[22px] justify-center border border-[#c4c4c4] bg-[#f0f0f0] pt-[22px]"><Tri /></span>
    </div>
    <div className="ml-[3px] flex gap-[6px]">
      <Ico><path d="M0 17L15 5v7h17v9H15v10z" fill="#9c9c9c" /></Ico>
      <Ico><path d="M32 17L17 5v7H0v9h17v10z" fill="#9c9c9c" /></Ico>
      <Ico><path d="M12 4h10v24H12z" fill="#ccc" stroke="#aaa" /><path d="M13 22h8v5h-8z" fill="#999" /></Ico>
    </div>
    <Sep cls="ml-[8px]" />
    <div className="ml-[6px]"><Ico><path d="M2 15C-1 3 20 1 30 8c1 6-8 7-10 14-7 5-17 1-18-7z" stroke="#999" strokeWidth="2" /><path d="M10 10l9 7-4 6z" fill="#999" /></Ico></div>
    <div className="mt-[17px] ml-[5px]"><Tri /></div>
    <div className="ml-[8px]"><Ico><Trash g /></Ico></div>
    <Sep cls="ml-[5px]" />
    <div className="ml-[6px] flex gap-[2px]">
      <Ico><path d="M4 22l5-10 8 6zM20 16q4 2 3 6" fill="#b5b5b5" /></Ico>
      <Ico><path d="M28 22l-5-10-8 6zM8 22q0-5 3-6" fill="#b5b5b5" /></Ico>
    </div>
    <Sep cls="ml-[11px]" />
    <div className="ml-[6px]"><Ico><rect x="2" y="2" width="27" height="27" rx="3" fill="#9a9a9a" /><path d="M7 18h18v9H7z" fill="#ccc" /><path d="M11 20h5v6h-5z" fill="#777" /></Ico></div>
  </div>
);

const menus: [string, string][] = [
  ["Survey", "w-[52px]"], ["Analysis", "w-[62px]"], ["Processing", "w-[79px]"], ["Scenes", "w-[58px]"], ["View", "w-[42px]"],
  ["Utilities", "w-[57px]"], ["CLAS", "w-[47px]"], ["SSIS", "w-[43px]"], ["Help", "w-[40px]"],
];
const Spin = ({ v, cls }: { v: string; cls: string }) => (
  <div className={`flex h-[32px] border border-[#a5a7ab] bg-white ${cls}`}>
    <span className="flex-1 pl-[2px] leading-[32px]">{v}</span>
    <span className="flex w-[15px] flex-col border border-[#a5a7ab] bg-[#ebebeb]">
      <span className="flex flex-1 rotate-180 items-center justify-center border-t border-[#a5a7ab]"><svg width="5" height="3"><path d="M0 0h5L2.500 3z" /></svg></span>
      <span className="flex flex-1 items-center justify-center"><svg width="5" height="3"><path d="M0 0h5L2.500 3z" /></svg></span>
    </span>
  </div>
);
const Arrow = ({ flip = false }: { flip?: boolean }) => (
  <svg width="32" height="28" viewBox="0 0 32 28" className={flip ? "block -scale-x-100" : "block"}>
    <defs><linearGradient id="arrowfill"><stop offset=".5" stopColor="#2cb54a" /><stop offset="1" stopColor="#169a48" /></linearGradient></defs>
    <path d="M0 14L14 0v7h18v14H14v7z" fill="url(#arrowfill)" />
  </svg>
);
const MdiBtn = ({ children }: Kids) => (
  <div className="flex h-[18px] w-[17px] items-center justify-center border border-[#8f9fb5] bg-[#dbe8f7]"><svg width="9" height="9" viewBox="0 0 9 9" fill="none" stroke="#6d7b8c" strokeWidth="1.500">{children}</svg></div>
);

export default function App() {
  return (
    <div className="relative flex h-[735px] w-[1364px] flex-col overflow-hidden bg-[#f0f0f0] font-['Liberation_Sans',Arial,sans-serif] text-[12px] tracking-[0.1px] text-black">
      <div className="flex h-[23px] shrink-0 items-start border-b border-[#9dbdbe] bg-[#b3d5d6]">
        <div className="pt-[3px]"><Logo /></div>
        <div className="flex-1 pl-[510px] font-['Open_Sans',sans-serif] text-[14px] leading-[23px] tracking-[0.08px] whitespace-nowrap text-[#222]">OpendTect V4.6.0d/win64: F3 Demo - [Scene 1]</div>
        <div className="mt-[11px] mr-[17px] h-[2px] w-[8px] bg-[#222]" />
        <svg className="mt-[4px] mr-[8px]" width="11" height="11" viewBox="0 0 11 11" fill="none" stroke="#222"><path d="M.5 2.500h7.500v7.500H.5zM2.500.500h8v8" strokeWidth="1.300" /></svg>
        <div className="mr-[3px] flex h-[19px] w-[45px] items-center justify-center bg-[#c75050]"><svg width="8" height="8" viewBox="0 0 8 8"><path d="M.5.5l7 7M7.500.5l-7 7" stroke="#fff" strokeWidth="1.800" /></svg></div>
      </div>

      <div className="flex h-[22px] shrink-0 items-center border-b border-[#9b9b9b]">
        <svg width="14" height="15" viewBox="0 0 14 15" fill="none" stroke="#a5713d" className="mr-[8px]"><path d="M0 5l9-4 4 2v7l-5 4-8-2M0 5l8 1v8M8 6l5-3M0 12l8-6M3 4v7" /></svg>
        {menus.map(([m, w]) => <span key={m} className={`shrink-0 tracking-[0.2px] ${w}`}>{m}</span>)}
        <div className="flex flex-1 justify-end gap-px pr-px">
          <MdiBtn><path d="M1 7.500h6" strokeWidth="2" /></MdiBtn>
          <MdiBtn><path d="M1 4h5v4H1zM3 3V1h5v4H7" /></MdiBtn>
          <MdiBtn><path d="M1 1l7 7M8 1L1 8" strokeWidth="2" /></MdiBtn>
        </div>
      </div>

      <div className="flex h-[42px] shrink-0 border-b border-[#9b9b9b]">
        <Dots v cls="mt-[3px] ml-[2px] h-[37px]" />
        <div className="mt-[6px] ml-[7px] h-[30px] w-[30px] bg-[#c0c0c0]" />
        <div className="ml-[193px] w-[3px] border-l border-[#9b9b9b] bg-white" />
        <Dots v cls="mt-[3px] ml-[2px] h-[37px]" />
        <div className="ml-[2px] flex items-center pb-[1px]">
          {topIcons.map((ic, i) => <div key={i} className="flex w-[39.100px] justify-center"><Ico>{ic}</Ico></div>)}
        </div>
        <div className="ml-[4px] flex w-[12px] items-center justify-center">
          <svg width="9" height="7" viewBox="0 0 9 7" fill="none" stroke="#000" strokeWidth="1.400"><path d="M1 .5l3 3-3 3M5 .5l3 3-3 3" /></svg>
        </div>
        <div className="w-[3px] border-l border-[#9b9b9b] bg-white" />
        <Dots v cls="mt-[3px] ml-[2px] h-[37px]" />
        <div className="ml-[3px] flex items-center">
          <span className="w-[13px]">Inl</span>
          <Spin v="340" cls="w-[46px]" />
          <span className="w-[25px]">Step</span>
          <Spin v="1" cls="w-[46px]" />
          <div className="ml-[3px] flex gap-[7px]"><Arrow /><Arrow flip /></div>
        </div>
      </div>

      <div className="flex h-[36px] shrink-0 border-b border-[#9b9b9b] pt-[2px]">
        <Dots v cls="mt-[1px] ml-[2px] h-[31px]" />
        <div className="ml-[3px] h-[32px] w-[64px] border border-[#a5a7ab] bg-white pl-[2px] leading-[31px]">-4500</div>
        <div className="h-[32px] w-[64px] border border-[#84868c] p-px"><Grad cls="h-full w-full" /></div>
        <div className="h-[32px] w-[64px] border border-[#a5a7ab] bg-white pl-[2px] leading-[31px]">4500</div>
        <div className="flex h-[32px] w-[128px] items-center border border-[#a5a7ab] bg-white">
          <Grad cls="ml-[3px] h-[10px] w-[16px]" /><span className="flex-1 pl-[3px] tracking-[0.45px]">Seismics</span>
          <span className="flex h-full w-[16px] items-center justify-center border border-[#a5a7ab] bg-[#ebebeb]"><Chev /></span>
        </div>
      </div>

      <div className="flex h-[553px] shrink-0">
        <div className="flex w-[53px] flex-col border-r border-b border-[#9b9b9b]">
          <Dots cls="mt-[3px] mb-[4px] ml-[2px] w-[49px]" />
          {leftIcons.map((ic, i) => (
            <div key={i} className={`flex h-[38px] shrink-0 items-center ${i === 8 ? "w-[39px] border border-[#5f9fe0] bg-[#b4d3f1] pl-[2px]" : "pl-[3px]"}`}>
              <Ico>{ic}</Ico>{(i === 6 || i === 11) && <div className="ml-[6px]"><Tri /></div>}
            </div>
          ))}
          <svg className="mt-[38px] ml-[22px]" width="7" height="9" viewBox="0 0 7 9" fill="none" stroke="#000" strokeWidth="1.400"><path d="M.5 1l3 2.500 3-2.500M.5 5l3 2.500 3-2.500" /></svg>
        </div>
        <div className="flex w-[200px] flex-col pt-[2px]">
          <div className="flex h-[19px] shrink-0 items-center border border-[#a0a0a0] pr-[3px] pl-[3px]">
            <span className="flex-1 -translate-y-px tracking-[0.2px]">Tree scene 1</span>
            <svg width="9" height="9" viewBox="0 0 9 9" fill="none" stroke="#000" strokeWidth="1.200"><path d="M.6 4h5v4h-5zM3 4V1.200h5.300V6H6" /></svg>
          </div>
          <div className="mt-[2px] flex-1 border border-[#82868f] bg-white">
            <div className="flex h-[23px] items-center border-b border-[#e2ecf5] bg-[#fcfcfc]">
              <span className="h-full w-[156px] border-r border-[#e2ecf5] pl-[4px] leading-[22px] tracking-[0.2px]">Elements</span><span className="pl-[4px] tracking-[0.3px]">Color</span>
            </div>
            {rows.map((r) => <TreeRow key={r.t} r={r} />)}
          </div>
        </div>
        <div className="flex w-[35px] flex-col pt-[2px]">
          <div className="ml-[9px] flex h-[86px] w-[15px] flex-col justify-between border border-black bg-[linear-gradient(#3c2626,#b08484_22%,#f4cccc_50%,#b08484_78%,#3c2626)] px-[2px] py-[3px]">
            <span className="h-[3px] border border-[#5c4040]" /><span className="h-[5px] border border-[#6c4d4d]" /><span className="h-[8px] border border-[#8a6868]" /><span className="h-[10px] border border-[#9a7777]" />
            <span className="h-[10px] border border-[#a58080]" /><span className="h-[10px] border border-[#9a7777]" /><span className="h-[8px] border border-[#8a6868]" /><span className="h-[5px] border border-[#6c4d4d]" /><span className="h-[3px] border border-[#5c4040]" />
          </div>
          <span className="mt-[13px] ml-[6px] w-[24px] tracking-[-0.3px]">Mov</span>
        </div>
        <div className="flex w-[1021px] flex-col">
          <Scene />
          <div className="mt-[17px] ml-[4px] h-[4px] w-[1013px] border border-[#cfd4d2] bg-[#e2e8e6]" />
        </div>
        <div className="flex w-[55px] flex-col border-r border-b border-[#9b9b9b]">
          <Dots cls="mt-[3px] mb-[4px] ml-[3px] w-[50px]" />
          {rightIcons.map((ic, i) => (
            <div key={i} className="flex h-[38px] shrink-0 items-center pl-[5px]">
              <Ico>{ic}<Folder /></Ico>{(i < 3 || i === 7) && <div className="ml-[6px]"><Tri /></div>}
            </div>
          ))}
          <div className="mt-[1px] h-px shrink-0 bg-[#9b9b9b]" />
          <Dots cls="mt-[4px] mb-[6px] ml-[3px] w-[50px]" />
          <div className="pl-[5px]"><Ico>
            <rect x="3" y="1" width="12" height="6" fill="#e8771a" /><rect x="3" y="7" width="12" height="4" fill="#ffd800" /><rect x="3" y="11" width="12" height="4" fill="#2be02b" /><rect x="3" y="15" width="12" height="9" fill="#9accff" /><rect x="3" y="24" width="12" height="5" fill="#ffd800" />
            <path d="M26 1c-8 6-4 6-2 9 6 3-2 4 1 8 4 6 2 7-5 10" stroke="#18d4f0" strokeWidth="1.700" />
          </Ico></div>
          <div className="mt-[6px] pl-[5px]"><Ico><g transform="translate(0 2)"><Layers /></g><path d="M24 3l6 8h-4v10h4l-6 9-6-9h4V11h-4z" fill="#138140" /></Ico></div>
          <div className="mt-[4px] h-px shrink-0 bg-[#9b9b9b]" />
          <Dots cls="mt-[4px] mb-[6px] ml-[3px] w-[50px]" />
          <div className="flex flex-col gap-[6px] pl-[5px]">
            <Ico><RainbowV x={1} y={2} w={14} h={28} /><rect x="17" y="2" width="13" height="28" rx="1" fill="#a5d8ee" stroke="#778" />{[[23, 10], [26, 18], [22, 25]].map(([a, b]) => <g key={b}><ellipse cx={a} cy={b} rx="3" ry="3.600" fill="#d8cf3a" /><ellipse cx={a} cy={b} rx="1.800" ry="2.200" fill="#e02a12" /></g>)}</Ico>
            <Ico><RainbowV x={1} y={1} w={29} h={15} /><rect x="1" y="17" width="29" height="14" rx="1" fill="#a5d8ee" stroke="#778" /><ellipse cx="16" cy="25" rx="14" ry="3" fill="#e3b83a" /><ellipse cx="19" cy="25" rx="11" ry="1.600" fill="#e02a12" /></Ico>
            <Ico>{["#ffdf55", "#f7c98a", "#d98a5a", "#fff", "#333", "#777", "#fff", "#ffcf6a", "#d88050", "#eee", "#fff", "#444", "#777"].map((c, i) => <rect key={i} x="3" y={1 + i * 2.350} width="26" height="2.500" fill={c} />)}<path d="M6 0v31" stroke="#2faa4a" strokeWidth="1.500" /><Cursor x={2} y={14} k={0.65} /></Ico>
          </div>
        </div>
      </div>

      <BottomBar />

      <div className="flex h-[16px] shrink-0 items-end">
        {[0, 1, 2, 3].map((n) => <div key={n} className={`h-[15px] shrink-0 border-r border-[#d6d6d6] ${n === 0 ? "w-[270px]" : "w-[274px]"}`} />)}
        <div className="flex-1 text-right leading-[12px] tracking-[0.02px] whitespace-nowrap">[free mem] 3.2/7.8 GB | [cpu] 4/4</div>
      </div>

      <Dialog />
    </div>
  );
}
